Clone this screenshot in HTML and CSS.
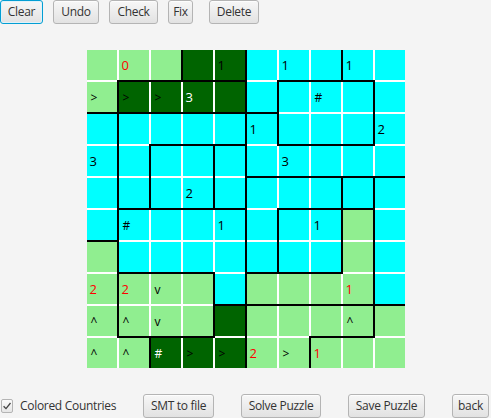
FILE: index.html
```html
<!DOCTYPE html>
<html>
<head>
<meta charset="utf-8">
<link rel="stylesheet" href="styles.css">
</head>
<body>
<div class="app">
  <div class="toolbar">
    <button class="btn focus w-clear">Clear</button>
    <button class="btn w-undo">Undo</button>
    <button class="btn w-check">Check</button>
    <button class="btn w-fix">Fix</button>
    <button class="btn w-delete">Delete</button>
  </div>
  <div class="board-wrap">
    <div class="board">
      <div class="cell lg"></div>
      <div class="cell lg B"><span class="red">0</span></div>
      <div class="cell lg R B"></div>
      <div class="cell dg B"></div>
      <div class="cell dg R B">1</div>
      <div class="cell cy"></div>
      <div class="cell cy B">1</div>
      <div class="cell cy R B"></div>
      <div class="cell cy B">1</div>
      <div class="cell cy"></div>

      <div class="cell lg R B sym">&gt;</div>
      <div class="cell dg B sym">&gt;</div>
      <div class="cell dg B sym">&gt;</div>
      <div class="cell dg B"><span class="white">3</span></div>
      <div class="cell dg R B"></div>
      <div class="cell cy R B"></div>
      <div class="cell cy"></div>
      <div class="cell cy sym">#</div>
      <div class="cell cy R"></div>
      <div class="cell cy"></div>

      <div class="cell cy R"></div>
      <div class="cell cy"></div>
      <div class="cell cy B"></div>
      <div class="cell cy B"></div>
      <div class="cell cy R B"></div>
      <div class="cell cy R">1</div>
      <div class="cell cy B"></div>
      <div class="cell cy B"></div>
      <div class="cell cy R B"></div>
      <div class="cell cy">2</div>

      <div class="cell cy R">3</div>
      <div class="cell cy R"></div>
      <div class="cell cy"></div>
      <div class="cell cy R"></div>
      <div class="cell cy R"></div>
      <div class="cell cy B"></div>
      <div class="cell cy B">3</div>
      <div class="cell cy B"></div>
      <div class="cell cy B"></div>
      <div class="cell cy B"></div>

      <div class="cell cy R"></div>
      <div class="cell cy R B"></div>
      <div class="cell cy B"></div>
      <div class="cell cy R B">2</div>
      <div class="cell cy R B"></div>
      <div class="cell cy"></div>
      <div class="cell cy B"></div>
      <div class="cell cy R B"></div>
      <div class="cell cy R B"></div>
      <div class="cell cy"></div>

      <div class="cell cy R B"></div>
      <div class="cell cy sym">#</div>
      <div class="cell cy"></div>
      <div class="cell cy"></div>
      <div class="cell cy R">1</div>
      <div class="cell cy R"></div>
      <div class="cell cy"></div>
      <div class="cell cy R">1</div>
      <div class="cell lg R"></div>
      <div class="cell cy"></div>

      <div class="cell lg R"></div>
      <div class="cell cy B"></div>
      <div class="cell cy B"></div>
      <div class="cell cy B"></div>
      <div class="cell cy R"></div>
      <div class="cell cy R B"></div>
      <div class="cell cy B"></div>
      <div class="cell cy R B"></div>
      <div class="cell lg R"></div>
      <div class="cell cy"></div>

      <div class="cell lg R"><span class="red">2</span></div>
      <div class="cell lg"><span class="red">2</span></div>
      <div class="cell lg sym">v</div>
      <div class="cell lg R"></div>
      <div class="cell cy R B"></div>
      <div class="cell lg B"></div>
      <div class="cell lg B"></div>
      <div class="cell lg B"></div>
      <div class="cell lg R B"><span class="red">1</span></div>
      <div class="cell cy B"></div>

      <div class="cell lg R sym">^</div>
      <div class="cell lg B sym">^</div>
      <div class="cell lg B sym">v</div>
      <div class="cell lg R B"></div>
      <div class="cell dg R"></div>
      <div class="cell lg"></div>
      <div class="cell lg"></div>
      <div class="cell lg B"></div>
      <div class="cell lg R B sym">^</div>
      <div class="cell lg"></div>

      <div class="cell lg sym">^</div>
      <div class="cell lg R sym">^</div>
      <div class="cell dg sym"><span class="white">#</span></div>
      <div class="cell dg sym">&gt;</div>
      <div class="cell dg R sym">&gt;</div>
      <div class="cell lg"><span class="red">2</span></div>
      <div class="cell lg R sym">&gt;</div>
      <div class="cell lg"><span class="red">1</span></div>
      <div class="cell lg"></div>
      <div class="cell lg"></div>
    </div>
  </div>
  <div class="bottombar">
    <label class="check-group">
      <span class="checkbox"><svg width="10" height="10" viewBox="0 0 10 10"><path d="M1.6 5.2 L4 7.6 L8.5 2" fill="none" stroke="#444" stroke-width="1.3"/></svg></span>
      <span class="check-label">Colored Countries</span>
    </label>
    <button class="btn w-smt">SMT to file</button>
    <button class="btn w-solve">Solve Puzzle</button>
    <button class="btn w-save">Save Puzzle</button>
    <button class="btn w-back">back</button>
  </div>
</div>
</body>
</html>
```
FILE: styles.css
```css
html, body {
  margin: 0;
  padding: 0;
  background: #f4f4f4;
}
body {
  font-family: "Open Sans", "Noto Sans", sans-serif;
  font-size: 12px;
  color: #333;
}
.app {
  display: flex;
  flex-direction: column;
  width: 491px;
  height: 418px;
}
.toolbar {
  display: flex;
  gap: 10px;
  height: 25px;
  align-items: flex-start;
}
.btn {
  box-sizing: border-box;
  height: 24px;
  padding: 0;
  margin: 0;
  border: 1px solid #b4b4b4;
  border-radius: 3px;
  background: linear-gradient(#f7f7f7, #e2e2e2);
  box-shadow: inset 0 1px 0 #fdfdfd;
  color: #333;
  font-family: "Open Sans", "Noto Sans", sans-serif;
  font-size: 12px;
  letter-spacing: -0.3px;
  line-height: 22px;
  text-align: center;
  white-space: nowrap;
}
.btn.focus {
  border-color: #039ed3;
  box-shadow: inset 0 0 0 1px #dff2fa;
}
.w-clear { width: 43px; }
.w-undo { width: 46px; }
.w-check { width: 49px; }
.w-fix { width: 25px; margin-right: 6px; }
.w-delete { width: 50px; }
.w-smt { width: 71px; }
.w-solve { width: 80px; }
.w-save { width: 77px; }
.w-back { width: 37px; }

.board-wrap {
  flex: 1;
  display: flex;
  align-items: center;
  justify-content: center;
}
.board {
  display: grid;
  grid-template-columns: repeat(10, 30px);
  grid-template-rows: repeat(10, 30px);
  gap: 2px;
  background: #fff;
  overflow: hidden;
}
.cell {
  position: relative;
  display: flex;
  align-items: center;
  padding-left: 3px;
  font-family: "Open Sans", "Noto Sans", sans-serif;
  font-size: 13px;
  color: #000;
}
.cell.sym {
  font-size: 12px;
  padding-left: 4px;
}
.lg { background: #90ee90; }
.dg { background: #006400; }
.cy { background: #00ffff; }
.red { color: #ff0000; }
.white { color: #ffffff; }
.R::after {
  content: "";
  position: absolute;
  top: -2px;
  bottom: -2px;
  right: -2px;
  width: 2px;
  background: #000;
  z-index: 1;
}
.B::before {
  content: "";
  position: absolute;
  left: -2px;
  right: -2px;
  bottom: -2px;
  height: 2px;
  background: #000;
  z-index: 1;
}

.bottombar {
  display: flex;
  align-items: center;
  gap: 27px;
  height: 25px;
}
.check-group {
  display: flex;
  align-items: center;
  width: 116px;
  gap: 7px;
  padding-left: 1px;
  box-sizing: border-box;
}
.checkbox {
  box-sizing: border-box;
  width: 14px;
  height: 14px;
  border: 1px solid #b4b4b4;
  border-radius: 2px;
  background: linear-gradient(#fbfbfb, #e6e6e6);
  display: flex;
  align-items: center;
  justify-content: center;
}
.check-label {
  font-size: 12px;
  letter-spacing: -0.3px;
  color: #333;
  white-space: nowrap;
}
```
